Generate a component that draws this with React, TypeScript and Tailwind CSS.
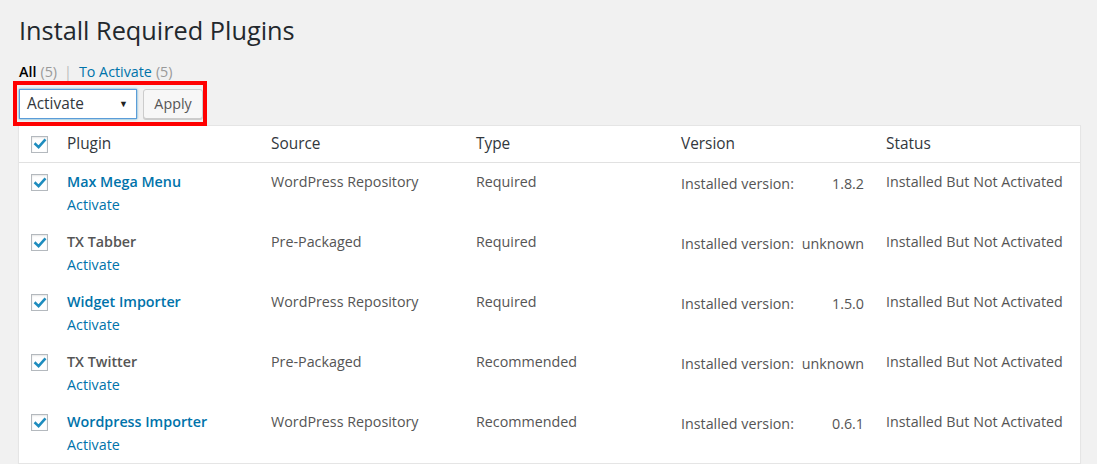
import React from "react";

type Row = {
  name: string;
  linked: boolean;
  source: string;
  type: string;
  version: string;
};

const ROWS: Row[] = [
  { name: "Max Mega Menu", linked: true, source: "WordPress Repository", type: "Required", version: "1.8.2" },
  { name: "TX Tabber", linked: false, source: "Pre-Packaged", type: "Required", version: "unknown" },
  { name: "Widget Importer", linked: true, source: "WordPress Repository", type: "Required", version: "1.5.0" },
  { name: "TX Twitter", linked: false, source: "Pre-Packaged", type: "Recommended", version: "unknown" },
  { name: "Wordpress Importer", linked: true, source: "WordPress Repository", type: "Recommended", version: "0.6.1" },
];

function Checkbox() {
  return (
    <span className="flex h-[17px] w-[17px] items-center justify-center border border-[#b4b9be] bg-white shadow-[inset_0_1px_2px_rgba(0,0,0,0.1)]">
      <svg width="14" height="14" viewBox="0 0 14 14">
        <path d="M2.5 7.2 L5.6 10.2 L11.6 3.4" fill="none" stroke="#1e8cbe" strokeWidth="2.6" strokeLinecap="square" />
      </svg>
    </span>
  );
}

const cols = "grid grid-cols-[38px_204px_205px_205px_205px_1fr]";

export default function App() {
  return (
    <div className="min-h-screen bg-[#f1f1f1] pl-[18px] pr-[16px] text-[14.3px] text-[#444]" style={{ fontFamily: '"Open Sans", sans-serif' }}>
      {/* Title */}
      <h1 className="pl-[1px] pt-[14px] text-[25.3px] leading-[32px] font-normal text-[#23282d]">Install Required Plugins</h1>

      {/* Filters */}
      <div className="mt-[16px] flex h-[20px] items-center pl-[1px] text-[14.3px]">
        <span className="font-semibold text-black">All</span>
        <span className="ml-[4px] text-[#999]">(5)</span>
        <span className="mx-[7px] text-[#bbb]">|</span>
        <span className="text-[#0073aa]">To Activate</span>
        <span className="ml-[4px] text-[#999]">(5)</span>
      </div>

      {/* Bulk actions */}
      <div className="relative mt-[7px] flex h-[30px] items-center gap-[6px] pl-[1px]">
        <div className="flex h-[30px] w-[118px] items-center justify-between border border-[#5b9dd9] bg-white pl-[7px] pr-[8px] text-[15.4px] text-[#32373c] shadow-[0_0_2px_rgba(30,140,190,0.8)]">
          <span>Activate</span>
          <span className="text-[9px] text-[#222]">▼</span>
        </div>
        <div className="flex h-[30px] w-[60px] items-center justify-center rounded-[3px] border border-[#ccc] bg-[#f7f7f7] text-[14.3px] text-[#555] shadow-[0_1px_0_#ccc]">
          Apply
        </div>
        <div className="pointer-events-none absolute left-[-5px] top-[-8px] h-[45px] w-[194px] border-[4px] border-[#ff0000]" />
      </div>

      {/* Table */}
      <div className="mt-[6px] border border-[#e5e5e5] bg-white shadow-[0_1px_1px_rgba(0,0,0,0.04)]">
        <div className={`${cols} h-[37px] items-center border-b border-[#e1e1e1] text-[15.4px] text-[#32373c]`}>
          <div className="pl-[12px]"><Checkbox /></div>
          <div className="pl-[10px]">Plugin</div>
          <div className="pl-[10px]">Source</div>
          <div className="pl-[10px]">Type</div>
          <div className="pl-[10px]">Version</div>
          <div className="pl-[10px]">Status</div>
        </div>
        {ROWS.map((r) => (
          <div key={r.name} className={`${cols} h-[60px] items-start leading-[20px] text-[#555]`}>
            <div className="pl-[12px] pt-[11px]"><Checkbox /></div>
            <div className="pl-[10px] pt-[9px]">
              <div className={`font-semibold ${r.linked ? "text-[#0073aa]" : "text-[#555]"}`}>{r.name}</div>
              <div className="mt-[3px] text-[#0073aa]">Activate</div>
            </div>
            <div className="pl-[10px] pt-[9px]">{r.source}</div>
            <div className="pl-[10px] pt-[9px]">{r.type}</div>
            <div className="pl-[10px] pt-[11px]">
              <div className="flex w-[183px] justify-between">
                <span>Installed version:</span>
                <span>{r.version}</span>
              </div>
            </div>
            <div className="pl-[10px] pt-[9px]">Installed But Not Activated</div>
          </div>
        ))}
      </div>
    </div>
  );
}
